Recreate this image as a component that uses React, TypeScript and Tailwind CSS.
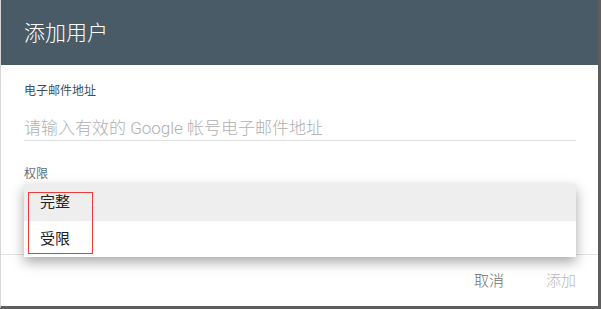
import React from "react";

const font = { fontFamily: 'Roboto, "Noto Sans CJK SC", sans-serif' };

export default function App() {
  return (
    <div className="w-[601px] h-[309px] bg-white" style={font}>
      <div className="w-full h-full flex flex-col border-l border-l-[#d6d6d6] border-r-[3px] border-r-[#5e5e5e] border-b-[3px] border-b-[#5e5e5e] bg-white">
        {/* 标题栏 */}
        <div className="h-[65px] shrink-0 bg-[#485b66] flex items-center pl-[23px]">
          <h1 className="text-[21px] leading-[28px] font-light text-white">添加用户</h1>
        </div>

        {/* 表单 */}
        <div className="flex-1 pl-[23px] pr-[22px] pt-[18px]">
          <div className="text-[12px] leading-[16px] text-[#3f5160]">电子邮件地址</div>
          <div className="mt-[18px] h-[24px] border-b border-[#e0e0e0] text-[17px] leading-[22px] font-light text-[#b0b0b0] whitespace-nowrap">
            请输入有效的 Google 帐号电子邮件地址
          </div>

          <div className="mt-[25px] text-[12px] leading-[16px] text-[#5f6f7a]">权限</div>
          <div className="relative mt-[2px]">
            {/* 下拉菜单 */}
            <div className="absolute left-0 right-0 top-0 z-10 bg-white shadow-[0_5px_12px_rgba(0,0,0,0.35)]">
              <div className="h-[37px] bg-[#eeeeee] flex items-center pl-4 text-[15px] text-[#222]">
                完整
              </div>
              <div className="h-[36px] flex items-center pl-4 text-[15px] text-[#222]">
                受限
              </div>
              <div className="absolute left-[4px] top-[8px] w-[65px] h-[62px] border border-[#ee3b3b]" />
            </div>
          </div>
        </div>

        {/* 底部按钮 */}
        <div className="h-[52px] shrink-0 border-t border-[#e3e3e3] flex items-center justify-end gap-[42px] pr-[22px] text-[15px] leading-[20px] font-light">
          <button type="button" className="text-[#6f6f6f]">取消</button>
          <button type="button" className="text-[#b8b8b8]">添加</button>
        </div>
      </div>
    </div>
  );
}
